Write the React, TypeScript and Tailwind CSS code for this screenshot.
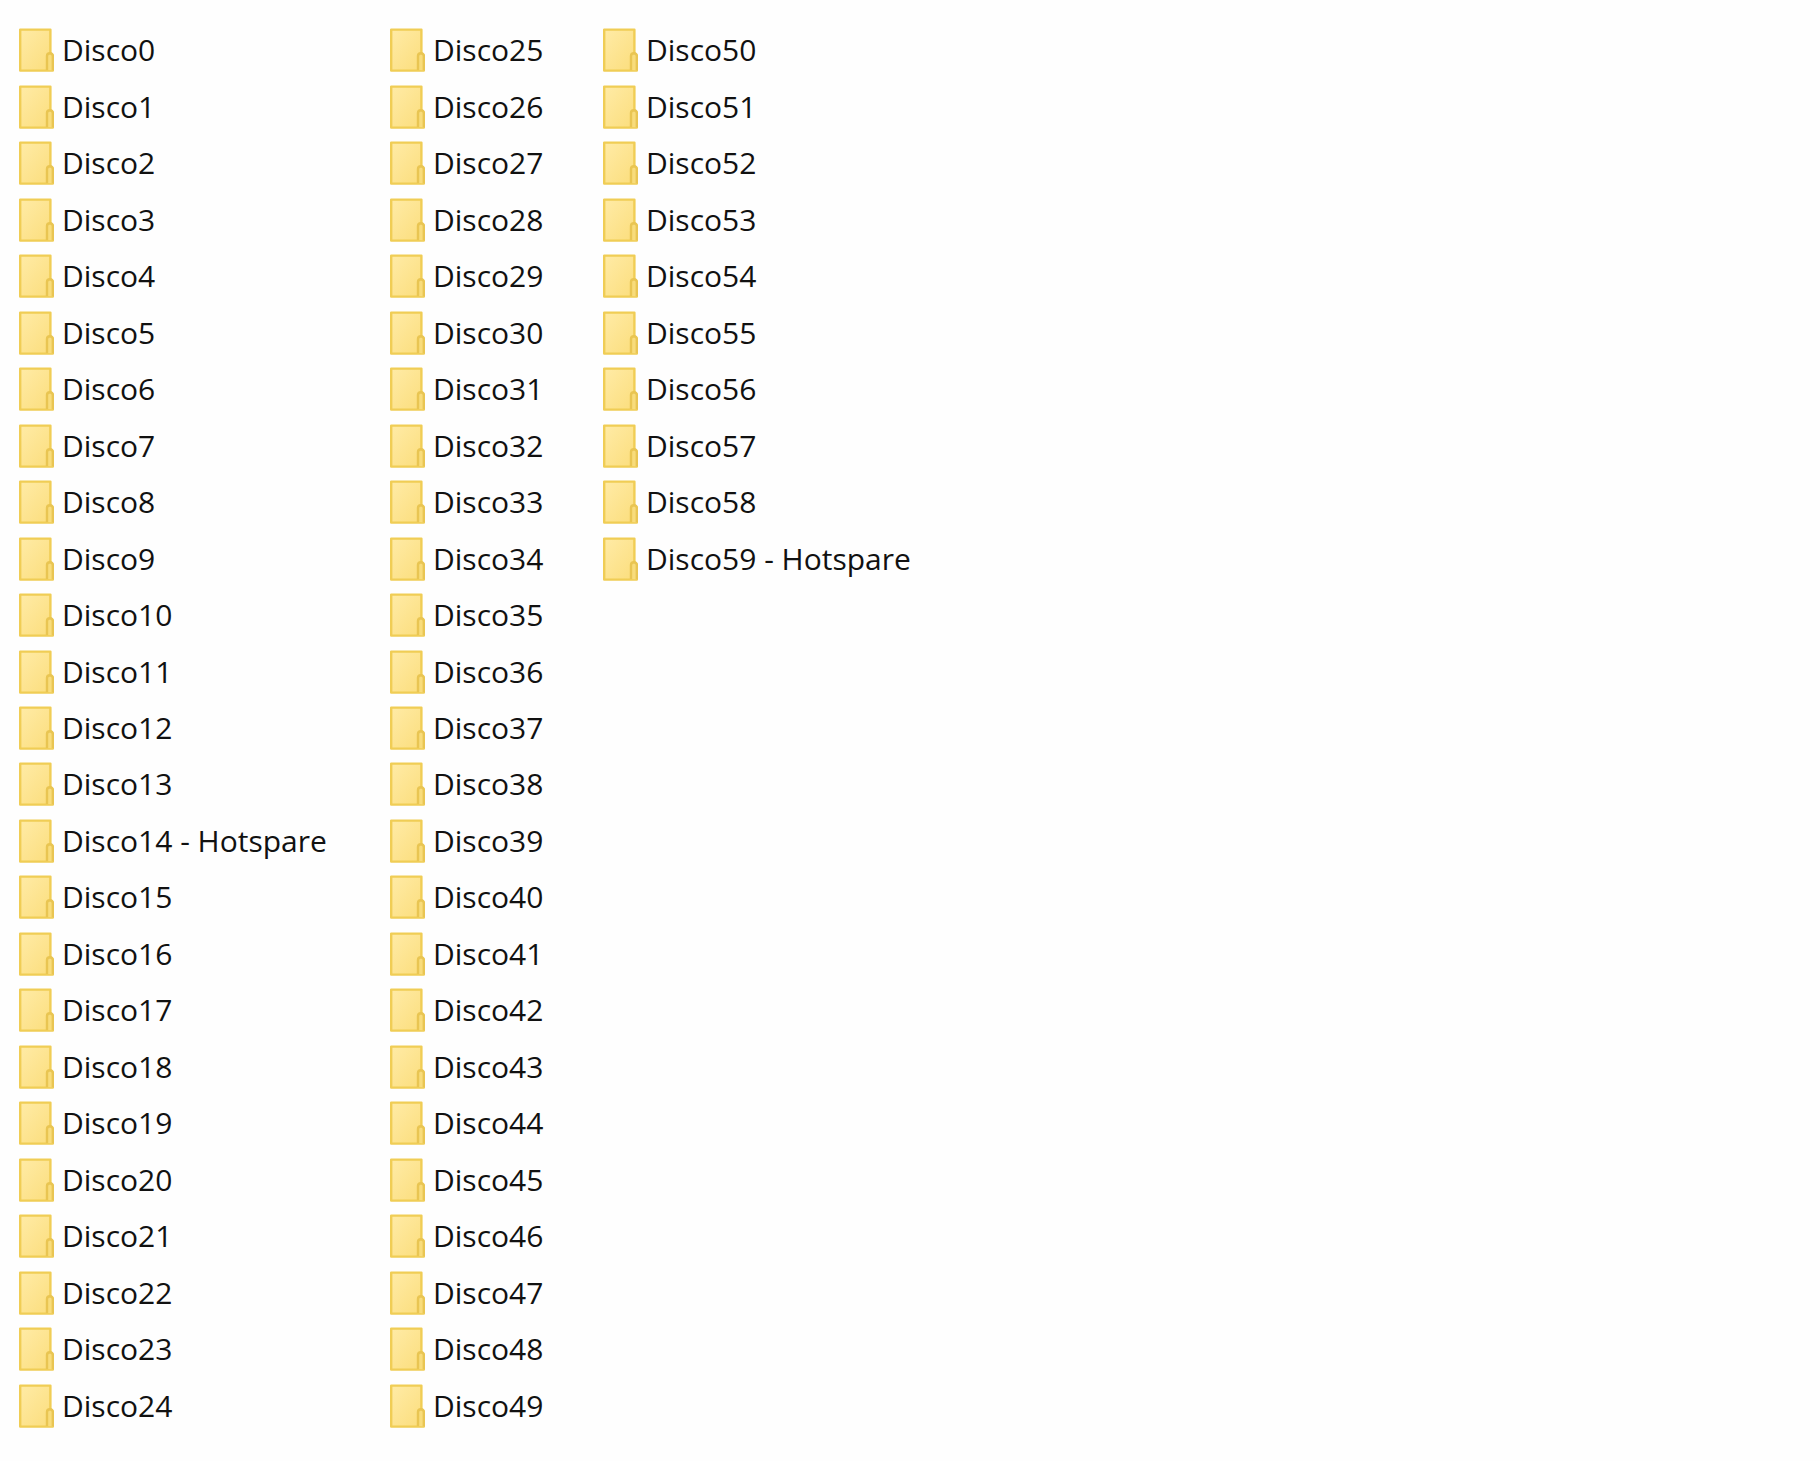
import React from 'react';

const HOTSPARES = [14, 59];

const folders = Array.from({ length: 60 }, (_, i) =>
  HOTSPARES.includes(i) ? `Disco${i} - Hotspare` : `Disco${i}`
);

const FolderIcon: React.FC = () => (
  <svg className="h-[44px] w-[35px] shrink-0" viewBox="0 0 35 44" fill="none" aria-hidden="true">
    <defs>
      <linearGradient id="folder-fill" x1="0" y1="0" x2="1" y2="1">
        <stop offset="0" stopColor="#ffeba6" />
        <stop offset="1" stopColor="#fbdd7b" />
      </linearGradient>
    </defs>
    <path
      d="M1.2 1.6H31.4V25L33.8 27.5V42.6H1.2Z"
      fill="url(#folder-fill)"
      stroke="#f0cd55"
      strokeWidth="2.4"
      strokeLinejoin="round"
    />
    <path
      d="M28 42V28Q28 25.2 30.9 25.2Q33.8 25.4 33.8 28V42.4"
      fill="#f8dc7c"
      stroke="#e9c552"
      strokeWidth="2.4"
    />
  </svg>
);

const FolderItem: React.FC<{ name: string }> = ({ name }) => (
  <li className="flex items-center gap-2 whitespace-nowrap">
    <FolderIcon />
    <span>{name}</span>
  </li>
);

export default function App() {
  return (
    <main className="min-h-screen bg-[#fefefe] font-['Open_Sans','Noto_Sans',sans-serif] text-[30px] leading-10 text-[#111111]">
      <ul className="grid min-h-screen grid-flow-col grid-cols-[371px_213px_1fr] grid-rows-[repeat(25,1fr)] pt-[22px] pb-[27px] pl-[19px]">
        {folders.map((name) => (
          <FolderItem key={name} name={name} />
        ))}
      </ul>
    </main>
  );
}
